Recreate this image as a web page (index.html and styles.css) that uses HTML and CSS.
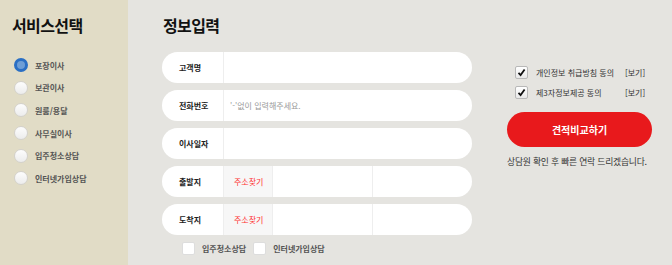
FILE: index.html
```html
<!DOCTYPE html>
<html lang="ko">
<head>
	<meta charset="UTF-8">
	<title>견적신청</title>
	<link rel="stylesheet" href="styles.css">
</head>
<body>
	<div id="wrap">
		<div class="side">
			<h2 class="tit">서비스선택</h2>
			<ul class="radios">
				<li class="on"><span class="radio"></span>포장이사</li>
				<li><span class="radio"></span>보관이사</li>
				<li><span class="radio"></span>원룸/용달</li>
				<li><span class="radio"></span>사무실이사</li>
				<li><span class="radio"></span>입주청소상담</li>
				<li><span class="radio"></span>인터넷가입상담</li>
			</ul>
		</div>
		<div class="form">
			<h2 class="tit">정보입력</h2>
			<div class="row"><span class="lab">고객명</span><span class="inp"></span></div>
			<div class="row"><span class="lab">전화번호</span><span class="inp hint">'-'없이 입력해주세요.</span></div>
			<div class="row"><span class="lab">이사일자</span><span class="inp"></span></div>
			<div class="row"><span class="lab">출발지</span><span class="find">주소찾기</span><span class="zip"></span><span class="inp"></span></div>
			<div class="row"><span class="lab">도착지</span><span class="find">주소찾기</span><span class="zip"></span><span class="inp"></span></div>
			<div class="extra">
				<span class="box"></span>입주청소상담
				<span class="box"></span>인터넷가입상담
			</div>
		</div>
		<div class="agree">
			<div class="chk"><span class="cbox"><svg width="9" height="9" viewBox="0 0 9 9"><path d="M1.5 4.8 L3.6 7 L7.6 1.5" fill="none" stroke="#111" stroke-width="1.8"/></svg></span><span class="txt">개인정보 취급방침 동의</span><span class="view">[보기]</span></div>
			<div class="chk"><span class="cbox"><svg width="9" height="9" viewBox="0 0 9 9"><path d="M1.5 4.8 L3.6 7 L7.6 1.5" fill="none" stroke="#111" stroke-width="1.8"/></svg></span><span class="txt">제3자정보제공 동의</span><span class="view">[보기]</span></div>
			<a href="javascript:;" class="btn">견적비교하기</a>
			<p class="note">상담원 확인 후 빠른 연락 드리겠습니다.</p>
		</div>
	</div>
</body>
</html>
```

FILE: styles.css
```css
*{margin:0;padding:0;list-style:none;box-sizing:border-box;}
body{font-family:"Noto Sans CJK KR","Noto Sans",sans-serif;background:#e5e4e0;color:#222;}
a{text-decoration:none;}
#wrap{display:flex;width:672px;height:265px;}
.tit{font-size:16px;font-weight:bold;line-height:22px;color:#111;letter-spacing:-0.6px;}

.side{width:128px;background:#e1dcc6;padding:14px 0 0 12px;}
.radios{margin-top:18px;}
.radios li{display:flex;align-items:center;height:22.6px;font-size:8px;font-weight:bold;color:#555;}
.radio{width:14px;height:14px;border-radius:50%;margin:0 7px 0 2px;border:1px solid #d4d2cc;background:linear-gradient(#fdfdfd,#ececec);}
.radios li.on .radio{border:3px solid #2a6fc4;background:#6d9ed6;}

.form{width:344px;padding:14px 0 0 34px;}
.form .tit{margin:0 0 16px 1px;}
.row{display:flex;height:31px;background:#fff;border-radius:16px;margin-bottom:7px;font-size:8px;line-height:31px;overflow:hidden;}
.lab{width:62px;padding-left:17px;font-weight:bold;color:#222;border-right:1px solid #eee;}
.inp{flex:1;}
.hint{padding-left:6px;color:#999;}
.find{width:49px;background:#f7f7f7;color:#f33;padding-left:10px;border-right:1px solid #eee;}
.zip{width:100px;border-right:1px solid #eee;}
.extra{display:flex;align-items:center;padding-left:20px;margin-top:1px;font-size:8px;font-weight:bold;color:#555;}
.box{width:13px;height:13px;background:#fff;border:1px solid #ddd;border-radius:2px;margin-right:7px;}
.extra .box:nth-of-type(2){margin-left:7px;}

.agree{width:145px;margin-left:35px;padding-top:66px;}
.chk{display:flex;align-items:center;height:13px;margin-bottom:7px;font-size:8px;color:#333;}
.cbox{display:flex;align-items:center;justify-content:center;width:13px;height:13px;margin-left:8px;border:1px solid #b8b8b8;border-radius:2px;background:linear-gradient(#fff,#e8e8e8);}
.txt{margin-left:8px;width:89px;}
.btn{display:block;margin-top:13px;height:35px;line-height:35px;border-radius:18px;background:#e8191c;color:#fff;text-align:center;font-size:10px;font-weight:bold;}
.note{margin-top:8px;font-size:8.8px;color:#333;letter-spacing:-0.2px;}
```
